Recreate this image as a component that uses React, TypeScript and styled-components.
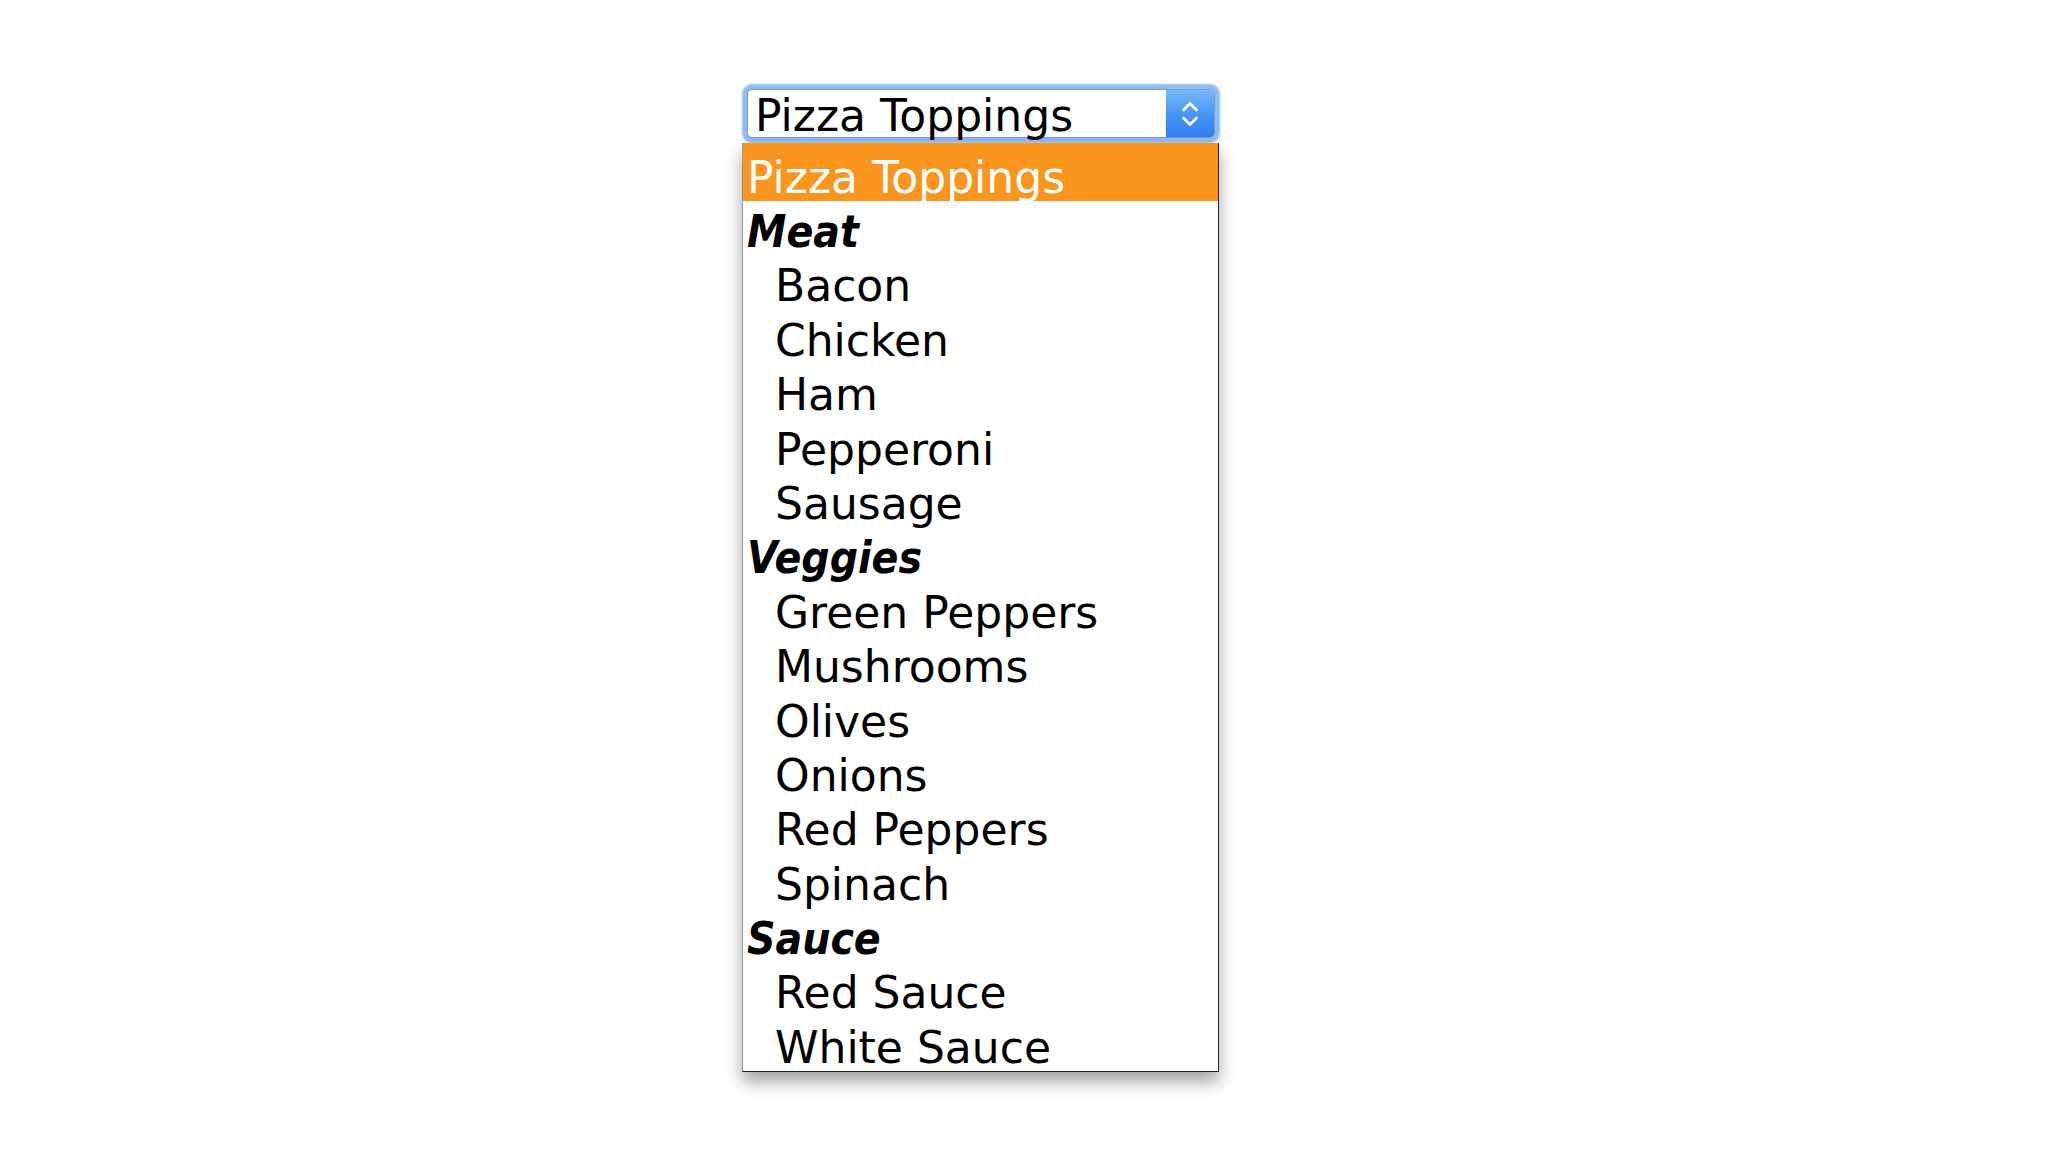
import styled, { createGlobalStyle } from 'styled-components';

const GlobalStyle = createGlobalStyle`
    html, body {
        margin: 0;
        padding: 0;
        background: #ffffff;
    }
    body {
        font-family: 'DejaVu Sans', 'Liberation Sans', sans-serif;
    }
`;

type Group = { label: string; items: string[] };

const groups: Group[] = [
    { label: 'Meat', items: ['Bacon', 'Chicken', 'Ham', 'Pepperoni', 'Sausage'] },
    {
        label: 'Veggies',
        items: [
            'Green Peppers',
            'Mushrooms',
            'Olives',
            'Onions',
            'Red Peppers',
            'Spinach',
        ],
    },
    { label: 'Sauce', items: ['Red Sauce', 'White Sauce'] },
];

const Page = styled.div`
    min-height: 1152px;
    padding: 89px 0 0 742px;
    box-sizing: border-box;
`;

const Picker = styled.div`
    display: flex;
    flex-direction: column;
    align-items: flex-start;
`;

const SelectBox = styled.div`
    width: 468px;
    height: 49px;
    margin: 0 0 5px 5px;
    display: flex;
    align-items: stretch;
    background: #ffffff;
    border: 1px solid #7d9cc6;
    border-radius: 5px;
    box-sizing: border-box;
    box-shadow: 0 0 2px 5px #8fbbf0;
`;

const SelectText = styled.div`
    flex: 1;
    padding-left: 7px;
    font-size: 44px;
    line-height: 51px;
    color: #000000;
    white-space: nowrap;
`;

const Stepper = styled.div`
    width: 48px;
    display: flex;
    align-items: center;
    justify-content: center;
    background: linear-gradient(#7ab8fb, #4592f7 55%, #2f7ff3);
    border-radius: 0 4px 4px 0;
`;

const Menu = styled.div`
    width: 477px;
    display: flex;
    flex-direction: column;
    background: #ffffff;
    border: 1px solid #9a9a9a;
    border-top: none;
    border-right-color: #262626;
    border-bottom-color: #1e1e1e;
    box-sizing: border-box;
    box-shadow: 0 10px 16px rgba(0, 0, 0, 0.36);
`;

const Row = styled.div<{ $selected?: boolean; $indent?: boolean; $group?: boolean }>`
    height: 54.4px;
    padding: ${(p) => (p.$selected ? '3.6px' : '0')} 0 0 ${(p) => (p.$indent ? '32px' : '4px')};
    line-height: 61.6px;
    font-size: 44px;
    white-space: nowrap;
    color: ${(p) => (p.$selected ? '#ffffff' : '#000000')};
    background: ${(p) => (p.$selected ? '#f9941c' : 'transparent')};
    font-weight: ${(p) => (p.$group ? 700 : 400)};
    font-style: ${(p) => (p.$group ? 'italic' : 'normal')};
    font-stretch: ${(p) => (p.$group ? 'condensed' : 'normal')};
`;

function Chevrons() {
    return (
        <svg width='22' height='32' viewBox='0 0 22 32'>
            <path
                d='M4.5 12 L11 5.5 L17.5 12'
                fill='none'
                stroke='#ffffff'
                strokeWidth='2.8'
                strokeLinecap='round'
                strokeLinejoin='round'
            />
            <path
                d='M4.5 20 L11 26.5 L17.5 20'
                fill='none'
                stroke='#ffffff'
                strokeWidth='2.8'
                strokeLinecap='round'
                strokeLinejoin='round'
            />
        </svg>
    );
}

function App() {
    return (
        <Page>
            <GlobalStyle />
            <Picker>
                <SelectBox>
                    <SelectText>Pizza Toppings</SelectText>
                    <Stepper>
                        <Chevrons />
                    </Stepper>
                </SelectBox>
                <Menu>
                    <Row $selected>Pizza Toppings</Row>
                    {groups.map((g) => (
                        <div key={g.label}>
                            <Row $group>{g.label}</Row>
                            {g.items.map((item) => (
                                <Row key={item} $indent>
                                    {item}
                                </Row>
                            ))}
                        </div>
                    ))}
                </Menu>
            </Picker>
        </Page>
    );
}

export default App;
